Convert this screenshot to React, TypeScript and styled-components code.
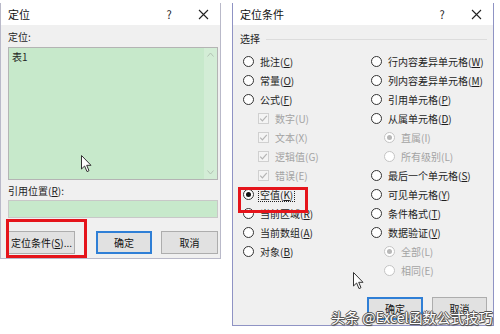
import React from 'react'
import styled, { createGlobalStyle } from 'styled-components'

const GlobalStyle = createGlobalStyle`
  html, body { margin: 0; padding: 0; background: #fff; }
  body {
    font-family: "Noto Sans CJK SC", "Liberation Sans", sans-serif;
    font-size: 10px;
    color: #1e1e1e;
  }
`

const Page = styled.div`
  position: relative;
  width: 500px;
  height: 334px;
  overflow: hidden;
  background: #fff;
  display: flex;
  align-items: flex-start;
  gap: 11px;
  padding-top: 3px;
  box-sizing: border-box;
`

const Window = styled.div<{ $w: number; $h: number; $edge: string }>`
  position: relative;
  flex: none;
  width: ${p => p.$w}px;
  height: ${p => p.$h}px;
  box-sizing: border-box;
  border: 1px solid ${p => p.$edge};
  border-top: none;
  background: #f0f0f0;
  display: flex;
  flex-direction: column;
`

const TitleBar = styled.div`
  height: 22px;
  flex: none;
  background: #fff;
  display: flex;
  align-items: center;
  padding-left: 7px;
`

const Title = styled.span`
  flex: 1;
  font-size: 11px;
  color: #111;
`

const TitleIcon = styled.span`
  width: 34px;
  display: flex;
  justify-content: center;
  align-items: center;
  font-size: 11px;
  color: #222;
`

const Body = styled.div<{ $pad: string }>`
  flex: 1;
  display: flex;
  flex-direction: column;
  padding: ${p => p.$pad};
`

const FieldLabel = styled.div<{ $mt?: number }>`
  height: 16px;
  line-height: 16px;
  margin-top: ${p => p.$mt ?? 0}px;
  font-size: 10px;
`

const ListBox = styled.div`
  margin-top: 2px;
  height: 133px;
  box-sizing: border-box;
  border: 1px solid #b4b4b4;
  background: #c7e9cb;
  display: flex;
`

const ListContent = styled.div`
  flex: 1;
  padding: 2px 3px;
  font-size: 10px;
  line-height: 13px;
`

const ScrollBar = styled.div`
  width: 13px;
  background: #d3edd6;
  display: flex;
  flex-direction: column;
  justify-content: space-between;
  align-items: center;
  padding: 4px 0;
  color: #b9c7ba;
`

const InputBox = styled.div`
  margin-top: 1px;
  height: 18px;
  box-sizing: border-box;
  border: 1px solid #c8c8c8;
  background: #c7e9cb;
`

const ButtonRow = styled.div<{ $mt: number }>`
  margin-top: ${p => p.$mt}px;
  display: flex;
  gap: 9px;
  align-items: center;
`

const Spacer = styled.div`
  flex: 1;
`

const Button = styled.div<{ $w: number; $default?: boolean }>`
  width: ${p => p.$w}px;
  height: 23px;
  box-sizing: border-box;
  background: #e1e1e1;
  border: ${p => (p.$default ? '2px solid #2f7fd6' : '1px solid #adadad')};
  display: flex;
  align-items: center;
  justify-content: center;
  font-size: 10px;
  color: #111;
`

const GroupHead = styled.div`
  display: flex;
  align-items: center;
  gap: 6px;
  height: 16px;
  font-size: 10px;
  padding-left: 7px;
  padding-right: 6px;
`

const GroupLine = styled.div`
  flex: 1;
  height: 1px;
  background: #dcdcdc;
  margin-top: 2px;
`

const OptionGrid = styled.div`
  margin-top: 6px;
  padding-left: 10px;
  display: grid;
  grid-template-columns: 128px 1fr;
`

const Column = styled.div`
  display: flex;
  flex-direction: column;
`

const OptionRow = styled.div<{ $indent: number; $disabled?: boolean }>`
  height: 19px;
  display: flex;
  align-items: center;
  gap: 4px;
  padding-left: ${p => p.$indent}px;
  font-size: 10px;
  white-space: nowrap;
  color: ${p => (p.$disabled ? '#a3a3a3' : '#1e1e1e')};
`

const Radio = styled.span<{ $disabled?: boolean }>`
  width: 11px;
  height: 11px;
  flex: none;
  box-sizing: border-box;
  border-radius: 50%;
  border: 1px solid ${p => (p.$disabled ? '#c4c4c4' : '#333')};
  background: #fff;
  display: flex;
  align-items: center;
  justify-content: center;
`

const RadioDot = styled.span<{ $disabled?: boolean }>`
  width: 5px;
  height: 5px;
  border-radius: 50%;
  background: ${p => (p.$disabled ? '#b8b8b8' : '#111')};
`

const OptionText = styled.span<{ $focus?: boolean }>`
  padding: 0 1px;
  border: 1px dotted ${p => (p.$focus ? '#222' : 'transparent')};
  line-height: 13px;
`

const ButtonBar = styled.div`
  margin-top: 17px;
  display: flex;
  justify-content: flex-end;
  gap: 9px;
  padding-right: 6px;
`

const Highlight = styled.div<{ $l: number; $t: number; $w: number; $h: number }>`
  position: absolute;
  left: ${p => p.$l}px;
  top: ${p => p.$t}px;
  width: ${p => p.$w}px;
  height: ${p => p.$h}px;
  box-sizing: border-box;
  border: 3px solid #e5141b;
  pointer-events: none;
`

const Cursor = styled.svg<{ $l: number; $t: number }>`
  position: absolute;
  left: ${p => p.$l}px;
  top: ${p => p.$t}px;
`

const Watermark = styled.div`
  position: absolute;
  left: 331px;
  top: 308px;
  font-size: 14px;
  line-height: 18px;
  color: #fff;
  white-space: nowrap;
  text-shadow: 1px 0 0 #555, -1px 0 0 #555, 0 1px 0 #555, 0 -1px 0 #555,
    1px 1px 1px #444;
`

const CloseIcon = () => (
  <svg width="11" height="11" viewBox="0 0 11 11">
    <path d="M1 1L10 10M10 1L1 10" stroke="#222" strokeWidth="1.1" fill="none" />
  </svg>
)

const ArrowCursor = ({ l, t }: { l: number; t: number }) => (
  <Cursor $l={l} $t={t} width="12" height="18" viewBox="0 0 12 18">
    <path
      d="M0.5 0.5L0.5 14L3.6 11L6 16.6L8 15.7L5.7 10.3L10 10.3Z"
      fill="#fff"
      stroke="#333"
      strokeWidth="1"
      strokeLinejoin="round"
    />
  </Cursor>
)

const CheckMark = () => (
  <svg width="11" height="11" viewBox="0 0 11 11" style={{ flex: 'none' }}>
    <rect x="0.5" y="0.5" width="10" height="10" fill="#f4f4f4" stroke="#d0d0d0" />
    <path d="M2.2 5.6L4.4 7.8L8.8 2.9" stroke="#b4b4b4" strokeWidth="1.2" fill="none" />
  </svg>
)

type Opt = {
  label: string
  key: string
  kind: 'radio' | 'check' | 'sub'
  checked?: boolean
  disabled?: boolean
  focus?: boolean
}

const leftOptions: Opt[] = [
  { label: '批注', key: 'C', kind: 'radio' },
  { label: '常量', key: 'O', kind: 'radio' },
  { label: '公式', key: 'F', kind: 'radio' },
  { label: '数字', key: 'U', kind: 'check', disabled: true },
  { label: '文本', key: 'X', kind: 'check', disabled: true },
  { label: '逻辑值', key: 'G', kind: 'check', disabled: true },
  { label: '错误', key: 'E', kind: 'check', disabled: true },
  { label: '空值', key: 'K', kind: 'radio', checked: true, focus: true },
  { label: '当前区域', key: 'R', kind: 'radio' },
  { label: '当前数组', key: 'A', kind: 'radio' },
  { label: '对象', key: 'B', kind: 'radio' },
]

const rightOptions: Opt[] = [
  { label: '行内容差异单元格', key: 'W', kind: 'radio' },
  { label: '列内容差异单元格', key: 'M', kind: 'radio' },
  { label: '引用单元格', key: 'P', kind: 'radio' },
  { label: '从属单元格', key: 'D', kind: 'radio' },
  { label: '直属', key: 'I', kind: 'sub', checked: true, disabled: true },
  { label: '所有级别', key: 'L', kind: 'sub', disabled: true },
  { label: '最后一个单元格', key: 'S', kind: 'radio' },
  { label: '可见单元格', key: 'Y', kind: 'radio' },
  { label: '条件格式', key: 'T', kind: 'radio' },
  { label: '数据验证', key: 'V', kind: 'radio' },
  { label: '全部', key: 'L', kind: 'sub', checked: true, disabled: true },
  { label: '相同', key: 'E', kind: 'sub', disabled: true },
]

const Option = ({ o }: { o: Opt }) => {
  const indent = o.kind === 'check' ? 15 : o.kind === 'sub' ? 13 : 0
  return (
    <OptionRow $indent={indent} $disabled={o.disabled}>
      {o.kind === 'check' ? (
        <CheckMark />
      ) : (
        <Radio $disabled={o.disabled}>{o.checked && <RadioDot $disabled={o.disabled} />}</Radio>
      )}
      <OptionText $focus={o.focus}>
        {o.label}(
        {o.disabled ? o.key : <u>{o.key}</u>})
      </OptionText>
    </OptionRow>
  )
}

const GotoDialog = () => (
  <Window $w={221} $h={256} $edge="#b9b9c9">
    <TitleBar>
      <Title>定位</Title>
      <TitleIcon>?</TitleIcon>
      <TitleIcon>
        <CloseIcon />
      </TitleIcon>
    </TitleBar>
    <Body $pad="4px 2px 5px 7px">
      <FieldLabel>定位:</FieldLabel>
      <ListBox>
        <ListContent>表1</ListContent>
        <ScrollBar>
          <svg width="7" height="5" viewBox="0 0 7 5">
            <path d="M0.5 4.5L3.5 1L6.5 4.5" stroke="#b3c3b4" fill="none" />
          </svg>
          <svg width="7" height="5" viewBox="0 0 7 5">
            <path d="M0.5 0.5L3.5 4L6.5 0.5" stroke="#b3c3b4" fill="none" />
          </svg>
        </ScrollBar>
      </ListBox>
      <FieldLabel $mt={3}>
        引用位置(<u>R</u>):
      </FieldLabel>
      <InputBox />
      <ButtonRow $mt={13}>
        <Button $w={67}>
          定位条件(<u>S</u>)...
        </Button>
        <Spacer />
        <Button $w={56} $default>
          确定
        </Button>
        <Button $w={57}>取消</Button>
      </ButtonRow>
    </Body>
    <Highlight $l={5} $t={216} $w={81} $h={39} />
    <ArrowCursor l={80} t={152} />
  </Window>
)

const SpecialDialog = () => (
  <Window $w={262} $h={323} $edge="#8f93c4">
    <TitleBar>
      <Title>定位条件</Title>
      <TitleIcon>?</TitleIcon>
      <TitleIcon>
        <CloseIcon />
      </TitleIcon>
    </TitleBar>
    <Body $pad="5px 0 0 0">
      <GroupHead>
        选择
        <GroupLine />
      </GroupHead>
      <OptionGrid>
        <Column>
          {leftOptions.map((o, i) => (
            <Option key={i} o={o} />
          ))}
        </Column>
        <Column>
          {rightOptions.map((o, i) => (
            <Option key={i} o={o} />
          ))}
        </Column>
      </OptionGrid>
      <ButtonBar>
        <Button $w={56} $default>
          确定
        </Button>
        <Button $w={55}>取消</Button>
      </ButtonBar>
    </Body>
    <Highlight $l={5} $t={184} $w={70} $h={26} />
    <ArrowCursor l={120} t={269} />
  </Window>
)

export default function App() {
  return (
    <>
      <GlobalStyle />
      <Page>
        <GotoDialog />
        <SpecialDialog />
        <Watermark>头条 @Excel函数公式技巧</Watermark>
      </Page>
    </>
  )
}
